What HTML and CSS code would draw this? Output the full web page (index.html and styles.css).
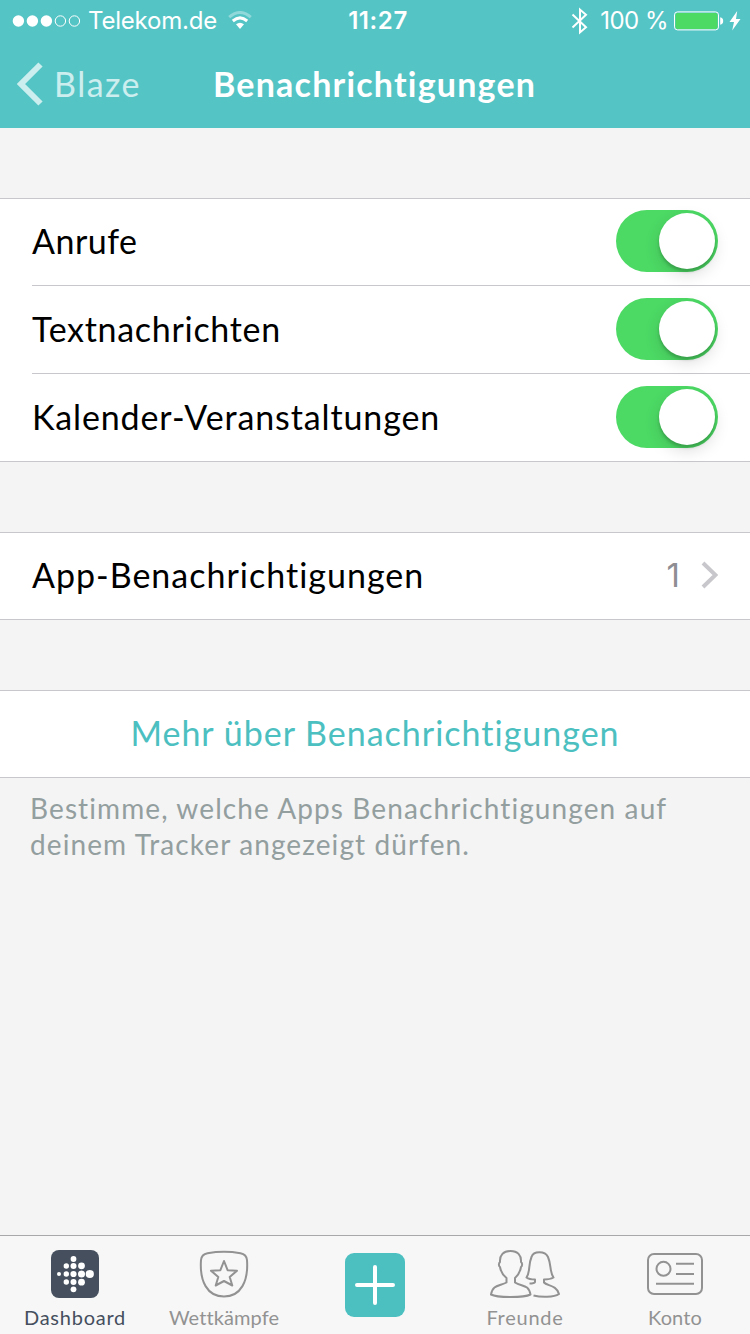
FILE: index.html
```html
<!DOCTYPE html>
<html lang="de">
<head>
<meta charset="utf-8">
<title>Benachrichtigungen</title>
<link rel="stylesheet" href="styles.css">
</head>
<body>
<div class="screen">
  <header class="header">
    <div class="status">
      <div class="status-left">
        <svg class="signal" width="70" height="14" viewBox="0 0 70 14">
          <g fill="#fff"><circle cx="6.4" cy="7" r="5.7"/><circle cx="20.4" cy="7" r="5.7"/><circle cx="34.4" cy="7" r="5.7"/></g>
          <g fill="none" stroke="#fff"><circle cx="48.4" cy="7" r="5.2"/><circle cx="62.4" cy="7" r="5.2"/></g>
        </svg>
        <span class="carrier">Telekom.de</span>
        <svg class="wifi" width="24" height="19" viewBox="0 0 24 19">
          <path d="M1.2 6.2Q12 -3.2 22.8 6.2" fill="none" stroke="#fff" stroke-opacity=".35" stroke-width="3"/>
          <path d="M4.8 10Q12 3.800 19.200 10" fill="none" stroke="#fff" stroke-width="3"/>
          <path d="M8 13.300Q12 10 16 13.300L12 18Z" fill="#fff"/>
        </svg>
      </div>
      <span class="clock">11:27</span>
      <div class="status-right">
        <svg class="bluetooth" width="18" height="28" viewBox="0 0 18 28"><path d="M1.500 7.500L15 20.200L9 25.400V2.600L15 7.800L1.500 20.500" fill="none" stroke="#fff" stroke-width="2"/></svg>
        <span class="percent">100 %</span>
        <svg class="battery" width="50" height="20" viewBox="0 0 50 20">
          <rect x=".5" y=".9" width="44" height="18" rx="3" fill="none" stroke="#fff"/>
          <rect x="1.500" y="2" width="42" height="16" rx="2" fill="#4cd964"/>
          <path d="M46.200 6.300Q49.200 6.700 49.200 10T46.200 13.700Z" fill="#fff"/>
        </svg>
        <svg class="bolt" width="12" height="20" viewBox="0 0 12 20"><path d="M8.200 0L.5 11H5L3.200 19.500L11.500 8H7Z" fill="#fff"/></svg>
      </div>
    </div>
    <nav class="navbar">
      <a class="back">
        <svg width="26" height="44" viewBox="0 0 26 44"><path d="M23.500 2.500L4 22L23.500 41.500" fill="none" stroke="#cceeee" stroke-width="6"/></svg>
        <span class="back-text">Blaze</span>
      </a>
      <h1 class="title">Benachrichtigungen</h1>
    </nav>
  </header>

  <main class="content">
    <section class="group">
      <div class="row"><span class="label short">Anrufe</span><span class="toggle"><span class="knob"></span></span></div>
      <div class="row"><span class="label medium">Textnachrichten</span><span class="toggle"><span class="knob"></span></span></div>
      <div class="row"><span class="label">Kalender-Veranstaltungen</span><span class="toggle"><span class="knob"></span></span></div>
    </section>
    <section class="group">
      <div class="row">
        <span class="label wide">App-Benachrichtigungen</span>
        <span class="count">1</span>
        <svg class="chevron" width="18" height="28" viewBox="0 0 18 28"><path d="M3 2L15.500 14L3 26" fill="none" stroke="#c7c7cc" stroke-width="4"/></svg>
      </div>
    </section>
    <section class="group">
      <div class="row centered"><a class="link">Mehr über Benachrichtigungen</a></div>
    </section>
    <p class="note">Bestimme, welche Apps Benachrichtigungen auf<br>deinem Tracker angezeigt dürfen.</p>
  </main>

  <footer class="tabbar">
    <div class="tab active">
      <svg width="48" height="48" viewBox="0 0 48 48">
        <rect width="48" height="48" rx="8" fill="#454f5e"/>
        <g fill="#fff">
          <circle cx="8" cy="24" r="2"/>
          <circle cx="15.300" cy="16" r="2.700"/><circle cx="15.300" cy="24" r="2.700"/><circle cx="15.300" cy="32" r="2.700"/>
          <circle cx="22.500" cy="9" r="2.900"/><circle cx="22.500" cy="16" r="3"/><circle cx="22.500" cy="24" r="3.100"/><circle cx="22.500" cy="32" r="3"/><circle cx="22.500" cy="39.300" r="2.900"/>
          <circle cx="30.500" cy="15.800" r="3.400"/><circle cx="30.500" cy="24" r="3.500"/><circle cx="30.500" cy="32.200" r="3.400"/>
          <circle cx="38.800" cy="24" r="4.100"/>
        </g>
      </svg>
      <span class="tab-label">Dashboard</span>
    </div>
    <div class="tab challenges">
      <svg width="50" height="48" viewBox="0 0 50 48" fill="none" stroke="#929292" stroke-width="2" stroke-linejoin="round">
        <path d="M8.500 3.200Q25 .3 41.500 3.200Q47.500 4.300 48 10C49.500 31 42 46.500 25 46.500S.5 31 2 10Q2.500 4.300 8.500 3.200Z"/>
        <path d="M25 11L28.600 20.200L38 20.700L30.700 27L33.300 35.500L25 31L16.700 35.500L19.300 27L12 20.700L21.400 20.200Z"/>
      </svg>
      <span class="tab-label tight">Wettkämpfe</span>
    </div>
    <div class="tab add">
      <svg width="60" height="64" viewBox="0 0 60 64"><rect width="60" height="64" rx="9" fill="#4cc0c1"/><path d="M30 14V50M12 32H48" stroke="#fff" stroke-width="4" stroke-linecap="round"/></svg>
    </div>
    <div class="tab">
      <svg width="70" height="48" viewBox="0 0 70 48" fill="none" stroke="#929292" stroke-width="2" stroke-linejoin="round">
        <path d="M16.500 28C12 24.500 10.500 20 10 17C8.300 16 8.800 13 10 12C9.500 5 13.500 1 20.500 1S31.500 5 31 12C32.500 13 32.500 16 31 17C30.500 20 29 24.500 25 28V32.500C29 35 34 35.500 37 37.500C39.500 39.500 40 42 40.500 44.500C34 47.800 7 47.800 1 44.500C1.500 42 2 39.500 4.500 37.500C7 35.500 13 34.500 16.500 32.500Z"/>
        <path d="M39.500 33.500C42.500 33.500 44.500 33 45 32V29.500C42 29.500 38.500 29 36.500 27.500C40.500 22 38 15 41.500 7C43.500 .8 55 .8 58 7C61.500 15 59.500 22 63.500 27.500C61 29 57.500 29.500 54 29.500V32.500C57 36 66.500 35 69 44C64 47.500 51 47.500 43.500 45.500"/>
      </svg>
      <span class="tab-label">Freunde</span>
    </div>
    <div class="tab">
      <svg width="56" height="42" viewBox="0 0 56 42" fill="none" stroke="#929292" stroke-width="2"><rect x="1" y="1" width="54" height="40" rx="6"/><circle cx="16.500" cy="15.800" r="7"/><path d="M29 10.800H47M29 21H47M9 30.800H47"/></svg>
      <span class="tab-label tight">Konto</span>
    </div>
  </footer>
</div>
</body>
</html>
```

FILE: styles.css
```css
* { box-sizing: border-box; }
body { margin: 0; }
.screen {
  width: 750px; height: 1334px; display: flex; flex-direction: column;
  background: #f4f4f4; font-family: Lato, sans-serif; color: #000; overflow: hidden;
  font-variant-ligatures: none;
}
.header { height: 128px; background: #55c4c5; color: #fff; }
.status {
  height: 40px; display: grid; grid-template-columns: 1fr auto 1fr; align-items: center;
  font: 24px/40px Inter, sans-serif; padding-top: 1px;
}
.status-left, .status-right { display: flex; align-items: center; }
.status-left { padding-left: 12px; }
.carrier { margin-left: 6px; width: 128px; white-space: nowrap; letter-spacing: -.2px; }
.wifi { margin: 0 0 1px 12px; }
.clock { font-weight: 600; font-size: 24px; letter-spacing: .6px; padding-left: 6px; }
.status-right { justify-content: flex-end; padding-right: 9px; }
.percent { margin-left: 11px; letter-spacing: -.5px; }
.battery { margin: 0 0 1px 6px; }
.bolt { margin: 0 0 1px 5px; }
.navbar {
  height: 88px; display: grid; grid-template-columns: 213px 324px 213px;
  align-items: center; font-size: 34px; line-height: 44px;
}
.back { display: flex; align-items: center; padding-left: 17px; color: #cceeee; }
.back-text { margin-left: 11px; letter-spacing: 1.5px; }
.title { margin: 0; font-size: 34px; font-weight: 700; letter-spacing: 1.2px; white-space: nowrap; }
.content { flex: 1; padding-top: 70px; }
.group { background: #fff; border-top: 1px solid #c8c7cc; border-bottom: 1px solid #c8c7cc; margin-bottom: 70px; }
.row {
  height: 88px; margin-left: 32px; padding: 0 32px 2px 0; display: flex; align-items: center;
  border-bottom: 1px solid #c8c7cc; font-size: 34px; line-height: 44px;
}
.row:first-child { height: 87px; }
.row:last-child { height: 87px; border-bottom: 0; padding-bottom: 1px; }
.row:only-child { height: 86px; padding-bottom: 2px; }
.label { flex: 1; white-space: nowrap; letter-spacing: .87px; }
.short { letter-spacing: .5px; }
.medium { letter-spacing: .7px; }
.wide { letter-spacing: 1px; }
.toggle {
  width: 102px; height: 62px; border-radius: 31px; background: #4cd964;
  padding: 3px; display: flex; justify-content: flex-end;
}
.knob {
  width: 56px; height: 56px; border-radius: 50%; background: #fff;
  box-shadow: 0 3px 3px rgba(0,0,0,.18), 0 6px 16px rgba(0,0,0,.13);
}
.count { color: #8e8e93; font-family: Inter, sans-serif; font-size: 33px; margin-right: 20px; }
.row.centered { justify-content: center; margin: 0; padding: 0 0 2px; }
.link { color: #4cc0c1; white-space: nowrap; letter-spacing: 1px; }
.note {
  margin: -58px 0 0 30px; color: #939e9f; font-size: 28px; line-height: 36px; white-space: nowrap;
  letter-spacing: 1.1px;
}
.tabbar {
  height: 99px; border-top: 1px solid #a8a8aa; background: #f7f7f7;
  display: grid; grid-template-columns: repeat(5, 150px);
}
.tab {
  display: flex; flex-direction: column; align-items: center; justify-content: space-between;
  padding: 14px 0 5px; color: #929292; font-size: 20px; line-height: 24px;
}
.tab-label { letter-spacing: .75px; }
.tight { letter-spacing: .1px; }
.challenges { padding-right: 2px; }
.tab:last-child { padding-top: 17px; }
.active { color: #454f5e; }
.tab.add { padding-top: 17px; }
```
